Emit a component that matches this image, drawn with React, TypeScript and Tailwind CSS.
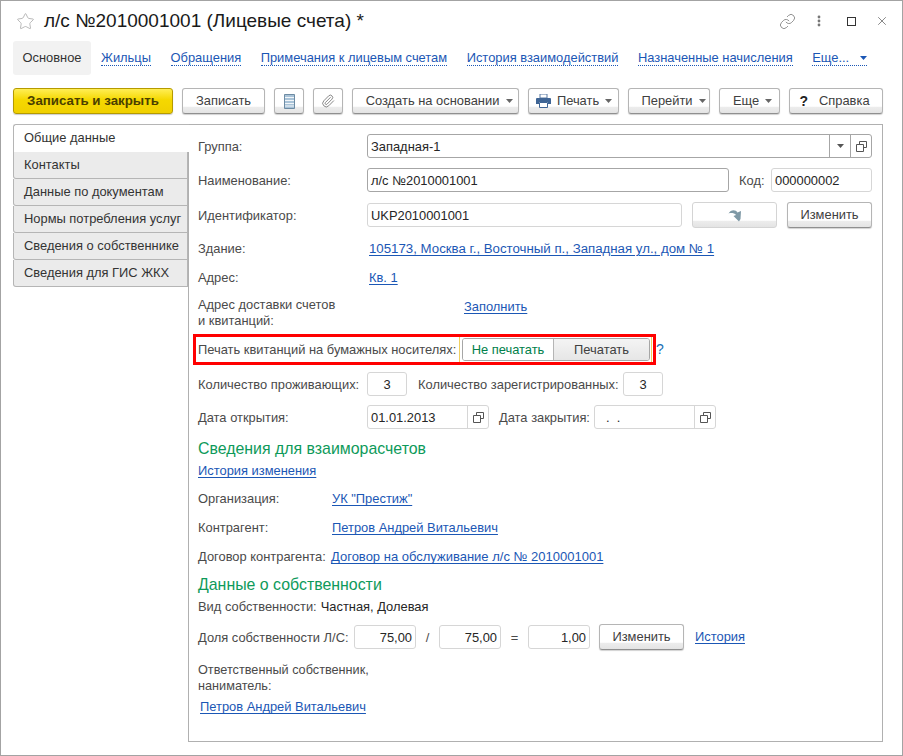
import React from "react";
import { Star, Link as LinkIcon, Paperclip, X } from "lucide-react";

const btn = "flex items-center justify-center shrink-0 h-[26px] rounded-[3px] border border-[#b5b5b5] border-b-[#8f8f8f] bg-[linear-gradient(#ffffff_0%,#ffffff_72%,#ececec_76%,#e4e4e4_100%)] shadow-[0_1px_1px_rgba(0,0,0,0.18)] text-[#404040]";
const inp = "flex items-center shrink-0 h-6 rounded-[3px] border border-[#d6d6d6] bg-white px-[3px] text-[#262626]";
const inpDark = "flex items-center shrink-0 h-6 rounded-[3px] border border-[#a6a6a6] bg-white px-[3px] text-[#262626]";
const lab = "text-[#4a4a4a] shrink-0";
const labI = "text-[#4a4a4a] shrink-0 pt-[2px]";
const link = "text-[#1b57b5] underline underline-offset-2 shrink-0";
const navLink = "text-[#1b57b5] border-b border-dotted border-[#1b57b5] leading-[14px] shrink-0";

const Caret = ({ c = "#666" }: { c?: string }) => (
  <svg width="7" height="4" viewBox="0 0 7 4" className="shrink-0"><path d="M0 0h7L3.500 4z" fill={c} /></svg>
);
const Open = () => (
  <svg width="11" height="11" viewBox="0 0 11 11" fill="none" stroke="#555" strokeWidth="1" className="shrink-0">
    <path d="M3.500 3V.5h7v6H8" /><path d="M.5 3.500h7v7h-7z" fill="#fff" />
  </svg>
);
const Printer = () => (
  <svg width="15" height="14" viewBox="0 0 15 14" className="shrink-0">
    <path d="M4 0h7v4H4z" fill="#fff" stroke="#5a7ba3" />
    <path d="M1 4h13a1 1 0 0 1 1 1v5h-3V8H3v2H0V5a1 1 0 0 1 1-1z" fill="#3f6595" />
    <path d="M3.500 8.500h8v5h-8z" fill="#fff" stroke="#3f6595" />
  </svg>
);
const Doc = () => (
  <svg width="11" height="15" viewBox="0 0 11 15" className="shrink-0">
    <path d="M.5.5h10v14H.5z" fill="#a9c3d8" stroke="#6d8ba3" />
    <path d="M1 3.500h9M1 6.500h9M1 9.500h9M1 12h9" stroke="#f2f6f9" />
  </svg>
);
const Arrow = () => (
  <svg width="14" height="13" viewBox="0 0 14 13">
    <path d="M0.500 4.500 C2.500 0.500 7.500 0 9.500 3.500 L13 2 L12.500 10 L11 12.500 L5.500 7 L8 6 C6.500 4 3 3.500 0.500 4.500z" fill="#7f99a6" />
  </svg>
);

export default function App() {
  return (
    <div className="w-[903px] h-[756px] flex flex-col bg-white border border-[#a3a3a3] overflow-hidden text-[12.9px] font-['Liberation_Sans',Arial,sans-serif] text-[#333]">
      {/* Title */}
      <div className="h-[40px] shrink-0 flex items-center pl-[15px] pr-[13px]">
        <Star size={19} strokeWidth={1} color="#a8a8a8" className="shrink-0" />
        <div className="ml-[9px] text-[19px] text-[#1a1a1a] whitespace-nowrap">л/с №2010001001 (Лицевые счета) *</div>
        <div className="ml-auto flex items-center">
          <LinkIcon size={17} strokeWidth={1} color="#666" />
          <svg width="4" height="12" viewBox="0 0 4 12" className="ml-[21px]"><circle cx="2" cy="2" r="1.400" fill="#777" /><circle cx="2" cy="6" r="1.400" fill="#777" /><circle cx="2" cy="10" r="1.400" fill="#777" /></svg>
          <div className="ml-[26px] w-[9px] h-[9px] border border-[#333]" />
          <X size={14} strokeWidth={1} color="#333" className="ml-[19px]" />
        </div>
      </div>
      {/* Nav */}
      <div className="h-[34px] shrink-0 ml-[12px] flex items-center">
        <div className="w-[78px] h-[34px] rounded-[3px] bg-[#f2f2f2] flex items-center justify-center text-[#333]">Основное</div>
        <div className="ml-[10px] mt-[1px] flex items-center gap-[19.500px]">
          <span className={navLink}>Жильцы</span>
          <span className={navLink}>Обращения</span>
          <span className={navLink}>Примечания к лицевым счетам</span>
          <span className={navLink}>История взаимодействий</span>
          <span className={navLink}>Назначенные начисления</span>
          <span className={`${navLink} flex items-center gap-[11px]`}>Еще... <Caret c="#1b57b5" /></span>
        </div>
      </div>
      {/* Toolbar */}
      <div className="h-[26px] mt-[13px] shrink-0 ml-[12px] flex items-center gap-[9px]">
        <div className="w-[160px] h-[26px] shrink-0 flex items-center justify-center rounded-[3px] border border-[#b59a00] bg-[linear-gradient(#ffee55,#f5d800_45%,#f0d000)] font-bold text-[13.300px] text-[#4a3f00] shadow-[0_1px_1px_rgba(0,0,0,0.2)]">Записать и закрыть</div>
        <div className={`${btn} w-[83px]`}>Записать</div>
        <div className={`${btn} w-[30px]`}><Doc /></div>
        <div className={`${btn} w-[30px]`}><Paperclip size={14} strokeWidth={1.500} color="#777" /></div>
        <div className={`${btn} w-[167px] gap-[7px] pl-[8px]`}>Создать на основании <Caret /></div>
        <div className={`${btn} w-[91px] gap-[6px] pl-[1px]`}><Printer /> Печать <Caret /></div>
        <div className={`${btn} w-[82px] gap-[6px] pl-[9px]`}>Перейти <Caret /></div>
        <div className={`${btn} w-[61px] gap-[6px] pl-[6px]`}>Еще <Caret /></div>
        <div className={`${btn} w-[94px] gap-[11px] pr-[3px]`}><span className="font-bold text-[14px] text-[#222]">?</span> Справка</div>
      </div>
      {/* Body */}
      <div className="mt-[10px] ml-[12px] flex h-[618px]">
        <div className="w-[175px] shrink-0 flex flex-col relative z-10 text-[#333]">
          <div className="h-[28px] -mr-px bg-white border border-[#b5b5b5] border-r-0 border-b-0 rounded-tl-[3px] pl-[10px] pt-[3px]">Общие данные</div>
          {["Контакты", "Данные по документам", "Нормы потребления услуг", "Сведения о собственнике", "Сведения для ГИС ЖКХ"].map((t) => (
            <div key={t} className="h-[27px] bg-[#ebebeb] border border-[#b5b5b5] border-t-0 first:border-t rounded-bl-[3px] pl-[10px] pt-[3px] whitespace-nowrap">{t}</div>
          ))}
        </div>
        <div className="w-[695px] shrink-0 border border-[#b0b0b0] pl-[9px] pt-[9px] whitespace-nowrap">
          <div className="flex items-center h-6 w-[674px]">
            <span className={`${labI} w-[169px]`}>Группа:</span>
            <div className={`${inpDark} w-[505px] !pr-0`}>
              <span className="flex-1 pt-[2px]">Западная-1</span>
              <span className="w-[21px] h-full border-l border-[#a6a6a6] flex items-center justify-center"><Caret c="#555" /></span>
              <span className="w-[21px] h-full border-l border-[#a6a6a6] flex items-center justify-center"><Open /></span>
            </div>
          </div>
          <div className="flex items-center h-6 mt-[10px]">
            <span className={`${labI} w-[169px]`}>Наименование:</span>
            <div className={`${inpDark} w-[362px] pt-[2px]`}>л/с №2010001001</div>
            <span className={`${labI} ml-[10px] w-[32px]`}>Код:</span>
            <div className={`${inp} w-[101px] pt-[2px]`}>000000002</div>
          </div>
          <div className="flex items-center h-[26px] mt-[10px]">
            <span className={`${labI} w-[169px]`}>Идентификатор:</span>
            <div className={`${inp} w-[315px] pt-[2px]`}>UKP2010001001</div>
            <div className={`${btn} ml-[10px] w-[85px] !border-[#d4d4d4] !shadow-none`}><Arrow /></div>
            <div className={`${btn} ml-[10px] w-[85px]`}>Изменить</div>
          </div>
          <div className="flex items-center h-5 mt-[11px]">
            <span className={`${lab} w-[171px]`}>Здание:</span>
            <span className={`${link} text-[13.250px]`}>105173, Москва г., Восточный п., Западная ул., дом № 1</span>
          </div>
          <div className="flex items-center h-5 mt-[9px]">
            <span className={`${lab} w-[171px]`}>Адрес:</span>
            <span className={link}>Кв. 1</span>
          </div>
          <div className="flex h-8 mt-[9px] leading-[16px]">
            <span className={`${lab} w-[266px]`}>Адрес доставки счетов<br />и квитанций:</span>
            <span className={`${link} mt-[2px]`}>Заполнить</span>
          </div>
          <div className="flex items-center -ml-[5px] mt-[5px]">
            <div className="flex items-center h-[31px] w-[463px] border-[3px] border-[#ff0000] pl-[2px]">
              <span className={`${lab} w-[261px]`}>Печать квитанций на бумажных носителях:</span>
              <div className="w-px h-full bg-[#f0d060]" />
              <div className="ml-[2px] flex h-[23px] w-[188px] rounded-[3px] border border-[#a6a6a6] overflow-hidden">
                <div className="w-[91px] bg-white flex items-center justify-center text-[#00804a] border-r border-[#b5b5b5]">Не печатать</div>
                <div className="flex-1 bg-[linear-gradient(#f4f4f4,#e6e6e6)] flex items-center justify-center text-[#404040]">Печатать</div>
              </div>
              <div className="ml-[1px] w-px h-full bg-[#f0d060]" />
            </div>
            <span className="ml-[0px] text-[#1b6fb5] text-[14px]">?</span>
          </div>
          <div className="flex items-center h-6 mt-[7px]">
            <span className={`${labI} w-[169px]`}>Количество проживающих:</span>
            <div className={`${inp} w-[40px] justify-center pt-[2px]`}>3</div>
            <span className={`${labI} ml-[11px] w-[205px]`}>Количество зарегистрированных:</span>
            <div className={`${inp} w-[40px] justify-center pt-[2px]`}>3</div>
          </div>
          <div className="flex items-center h-6 mt-[9px]">
            <span className={`${labI} w-[169px]`}>Дата открытия:</span>
            <div className={`${inp} w-[122px] !pr-0`}><span className="flex-1 pt-[2px]">01.01.2013</span><span className="w-[21px] h-full border-l border-[#d6d6d6] flex items-center justify-center"><Open /></span></div>
            <span className={`${labI} ml-[10px] w-[95px]`}>Дата закрытия:</span>
            <div className={`${inp} w-[122px] !pr-0`}><span className="flex-1 pl-[8px] pt-[2px]">.&nbsp;&nbsp;.</span><span className="w-[21px] h-full border-l border-[#d6d6d6] flex items-center justify-center"><Open /></span></div>
          </div>
          <div className="mt-[10px] h-[20px] flex items-center text-[15.900px] text-[#0e9a5a]">Сведения для взаиморасчетов</div>
          <div className="mt-[2px] h-[20px] flex items-center"><span className={link}>История изменения</span></div>
          <div className="flex items-center h-5 mt-[8px]"><span className={`${lab} w-[134px]`}>Организация:</span><span className={link}>УК "Престиж"</span></div>
          <div className="flex items-center h-5 mt-[9px]"><span className={`${lab} w-[134px]`}>Контрагент:</span><span className={link}>Петров Андрей Витальевич</span></div>
          <div className="flex items-center h-5 mt-[9px]"><span className={`${lab} w-[133px]`}>Договор контрагента:</span><span className={`${link} text-[13px]`}>Договор на обслуживание л/с № 2010001001</span></div>
          <div className="mt-[8px] h-[20px] flex items-center text-[15.900px] text-[#0e9a5a]">Данные о собственности</div>
          <div className="flex items-center h-4 mt-[4px]"><span className={lab}>Вид собственности:</span><span className="ml-[4px] text-[#262626]">Частная, Долевая</span></div>
          <div className="flex items-center h-[26px] mt-[9px]">
            <span className={`${labI} w-[156px]`}>Доля собственности Л/С:</span>
            <div className={`${inp} w-[62px] justify-end pt-[2px]`}>75,00</div>
            <span className={`${labI} w-[23px] text-center`}>/</span>
            <div className={`${inp} w-[62px] justify-end pt-[2px]`}>75,00</div>
            <span className={`${labI} w-[27px] text-center`}>=</span>
            <div className={`${inp} w-[62px] justify-end pt-[2px]`}>1,00</div>
            <div className={`${btn} ml-[9px] w-[85px]`}>Изменить</div>
            <span className={`${link} ml-[11px]`}>История</span>
          </div>
          <div className="mt-[12px] leading-[16px] text-[12.7px] text-[#4a4a4a]">Ответственный собственник,<br />наниматель:</div>
          <div className="mt-[3px] ml-[2px] h-5 flex items-center"><span className={link}>Петров Андрей Витальевич</span></div>
        </div>
      </div>
    </div>
  );
}
